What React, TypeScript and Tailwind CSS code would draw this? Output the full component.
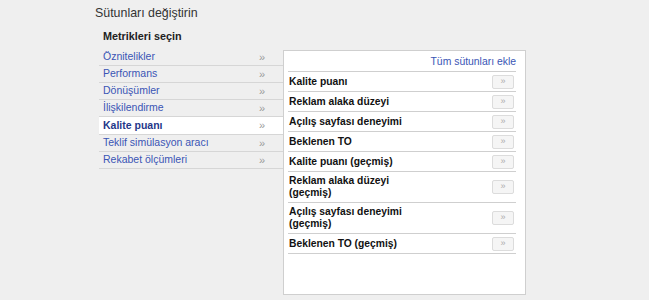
const categories = [
  "Öznitelikler",
  "Performans",
  "Dönüşümler",
  "İlişkilendirme",
  "Kalite puanı",
  "Teklif simülasyon aracı",
  "Rekabet ölçümleri",
];

const metrics: string[][] = [
  ["Kalite puanı"],
  ["Reklam alaka düzeyi"],
  ["Açılış sayfası deneyimi"],
  ["Beklenen TO"],
  ["Kalite puanı (geçmiş)"],
  ["Reklam alaka düzeyi", "(geçmiş)"],
  ["Açılış sayfası deneyimi", "(geçmiş)"],
  ["Beklenen TO (geçmiş)"],
];

const selected = "Kalite puanı";

export default function App() {
  return (
    <div
      className="h-[300px] w-full bg-[#efefef] pl-[95px] pt-[5px]"
      style={{ fontFamily: '"Liberation Sans", Arial, sans-serif' }}
    >
      <h1 className="text-[12.4px] leading-[16px] text-[#333]">
        Sütunları değiştirin
      </h1>
      <p className="mt-[8px] pl-[8px] text-[10.8px] font-bold leading-[14px] text-[#222]">
        Metrikleri seçin
      </p>

      <div className="mt-[3px] flex items-start">
        <ul className="ml-[4px] mt-[3px] w-[184px]">
          {categories.map((cat) => {
            const active = cat === selected;
            return (
              <li
                key={cat}
                className={
                  active
                    ? "flex h-[18px] items-center justify-between border-b border-[#d6d6d6] bg-white pl-[4px] pr-[18px] text-[10.5px] font-bold text-[#1f3789]"
                    : "flex h-[17px] items-center justify-between border-b border-[#d6d6d6] pl-[4px] pr-[18px] text-[10.5px] text-[#3a55b5]"
                }
              >
                <span>{cat}</span>
                <span className="text-[11px] font-normal text-[#9a9a9a]">»</span>
              </li>
            );
          })}
        </ul>

        <div className="mt-[4px] h-[245px] w-[243px] border border-[#cfcfcf] bg-white pl-[4px] pr-[9px]">
          <div className="flex h-[21px] items-center justify-end border-b border-[#cfcfcf] pt-[1px]">
            <span className="text-[10.4px] text-[#3a55b5]">Tüm sütunları ekle</span>
          </div>
          {metrics.map((lines) => (
            <div
              key={lines.join(" ")}
              className="flex min-h-[20px] items-center justify-between border-b border-[#cfcfcf] pl-[1px]"
            >
              <span className="py-[3px] text-[10.3px] font-bold leading-[12px] text-[#111]">
                {lines.map((l, i) => (
                  <span key={i} className="block">
                    {l}
                  </span>
                ))}
              </span>
              <button
                type="button"
                className="mr-[2px] flex h-[14px] w-[22px] items-center justify-center rounded-[2px] border border-[#dcdcdc] bg-[#f5f5f5] pb-[1px] text-[9px] leading-none text-[#aaa]"
              >
                »
              </button>
            </div>
          ))}
        </div>
      </div>
    </div>
  );
}
